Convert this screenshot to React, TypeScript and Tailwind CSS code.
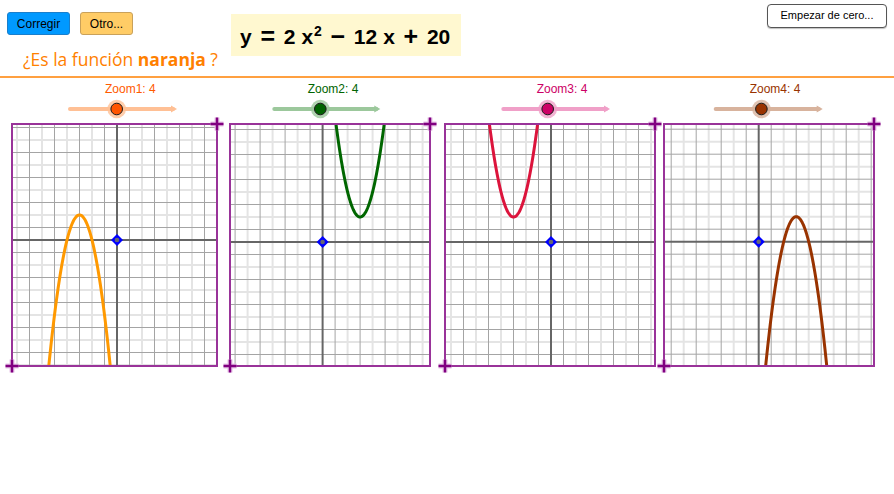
import React from "react";

const H = 242;
const U = 12.5;

type Panel = {
  w: number;
  ox: number;
  oy: number;
  f: (x: number) => number;
  curve: string;
  label: string;
  labelLeft: number;
  labelColor: string;
  s1: number;
  s2: number;
  knob: number;
  track: string;
  knobFill: string;
};

const panels: Panel[] = [
  {
    w: 205, ox: 105, oy: 116,
    f: (x) => -2 * (x + 3) * (x + 3) + 2, curve: "#ff9900",
    label: "Zoom1: 4", labelLeft: 93, labelColor: "#ff5a00",
    s1: 58, s2: 164, knob: 104.7, track: "#ffc095", knobFill: "#ff5500",
  },
  {
    w: 200, ox: 92.6, oy: 118,
    f: (x) => 2 * (x - 3) * (x - 3) + 2, curve: "#006600",
    label: "Zoom2: 4", labelLeft: 77.7, labelColor: "#006400",
    s1: 44.3, s2: 149.3, knob: 90.3, track: "#9cc89c", knobFill: "#006400",
  },
  {
    w: 210, ox: 106, oy: 118,
    f: (x) => 2 * (x + 3) * (x + 3) + 2, curve: "#dc143c",
    label: "Zoom3: 4", labelLeft: 91.7, labelColor: "#cc0066",
    s1: 58.3, s2: 164, knob: 102.7, track: "#f0a0c8", knobFill: "#cc0066",
  },
  {
    w: 210, ox: 94.7, oy: 117.7,
    f: (x) => -2 * (x - 3) * (x - 3) + 2, curve: "#993300",
    label: "Zoom4: 4", labelLeft: 85.7, labelColor: "#993300",
    s1: 51.7, s2: 157.7, knob: 97.4, track: "#d8b39d", knobFill: "#993300",
  },
];

const marginClass = ["ml-[12px]", "ml-[13px]", "ml-[15px]", "ml-[9px]"];

function Plus({ x, y }: { x: number; y: number }) {
  const d = `M${x - 6.5} ${y}H${x + 6.5}M${x} ${y - 6.5}V${y + 6.5}`;
  return (
    <g>
      <path d={d} stroke="#e7c4e7" strokeWidth={5} />
      <path d={d} stroke="#800080" strokeWidth={2.5} />
    </g>
  );
}

function Slider({ p }: { p: Panel }) {
  return (
    <svg width={p.w} height={28} className="block overflow-visible">
      <line x1={p.s1} y1={13} x2={p.s2 - 3} y2={13} stroke={p.track} strokeWidth={4} strokeLinecap="round" />
      <path d={`M${p.s2 - 5} 9.5L${p.s2 + 1} 13L${p.s2 - 5} 16.5Z`} fill={p.track} />
      <circle cx={p.knob} cy={13} r={9.3} fill={p.track} opacity={0.8} />
      <circle cx={p.knob} cy={13} r={5.8} fill={p.knobFill} stroke="#1a1a1a" strokeWidth={1} />
    </svg>
  );
}

function Graph({ p, idx }: { p: Panel; idx: number }) {
  const vLight: number[] = [];
  const vDark: number[] = [];
  const hLight: number[] = [];
  const hDark: number[] = [];
  for (let k = -30; k <= 30; k++) {
    if (k === 0) continue;
    const x = p.ox + k * U;
    const y = p.oy + k * U;
    const even = k % 2 === 0;
    if (x > 0 && x < p.w) (even ? vLight : vDark).push(x);
    if (y > 0 && y < H) (even ? hLight : hDark).push(y);
  }
  const pts: string[] = [];
  for (let px = 0; px <= p.w; px += 0.5) {
    const y = p.oy - p.f((px - p.ox) / U) * U;
    pts.push(`${px},${y.toFixed(2)}`);
  }
  const cid = `clip${idx}`;
  return (
    <svg width={p.w} height={H} className="block overflow-visible">
      <defs>
        <clipPath id={cid}>
          <rect x={0} y={0} width={p.w} height={H} />
        </clipPath>
      </defs>
      <rect x={0} y={0} width={p.w} height={H} fill="#ffffff" />
      {vLight.map((x) => (
        <line key={`vl${x}`} x1={x} y1={0} x2={x} y2={H} stroke="#e4e4e4" strokeWidth={2} />
      ))}
      {hLight.map((y) => (
        <line key={`hl${y}`} x1={0} y1={y} x2={p.w} y2={y} stroke="#e4e4e4" strokeWidth={2} />
      ))}
      {vDark.map((x) => (
        <line key={`vd${x}`} x1={x} y1={0} x2={x} y2={H} stroke="#a4a4a4" strokeWidth={1} />
      ))}
      {hDark.map((y) => (
        <line key={`hd${y}`} x1={0} y1={y} x2={p.w} y2={y} stroke="#a4a4a4" strokeWidth={1} />
      ))}
      <line x1={p.ox} y1={0} x2={p.ox} y2={H} stroke="#666666" strokeWidth={2} />
      <line x1={0} y1={p.oy} x2={p.w} y2={p.oy} stroke="#666666" strokeWidth={2} />
      <polyline
        points={pts.join(" ")}
        fill="none"
        stroke={p.curve}
        strokeWidth={3}
        clipPath={`url(#${cid})`}
      />
      <rect x={0} y={0} width={p.w} height={H} fill="none" stroke="#993399" strokeWidth={2} />
      <path
        d={`M${p.ox} ${p.oy - 6}L${p.ox + 6} ${p.oy}L${p.ox} ${p.oy + 6}L${p.ox - 6} ${p.oy}Z`}
        fill="#0000ff"
      />
      <circle cx={p.ox} cy={p.oy} r={2.3} fill="#666677" />
      <Plus x={p.w} y={0} />
      <Plus x={0} y={H} />
    </svg>
  );
}

function Op({ children }: { children: React.ReactNode }) {
  return (
    <span className="inline-block w-[17px] mx-[7.5px] text-center text-[25px] leading-none">
      {children}
    </span>
  );
}

export default function App() {
  return (
    <div className="w-[894px] h-[494px] bg-white overflow-hidden font-['Liberation_Sans',Arial,sans-serif]">
      <header className="flex h-[78px] box-border border-b-2 border-[#ffa040]">
        <div className="flex flex-col w-[231px] shrink-0 pl-[7px] pt-[12px]">
          <div className="flex gap-[10px]">
            <button className="w-[63px] h-[23px] rounded-[3px] bg-[#0099ff] border border-[#1a7fcc] text-[12px] text-black leading-none">
              Corregir
            </button>
            <button className="w-[53px] h-[23px] rounded-[3px] bg-[#ffcc66] border border-[#c9a15a] text-[12px] text-black leading-none">
              Otro...
            </button>
          </div>
          <p className="mt-[14px] pl-[16px] text-[17.5px] leading-[20px] text-[#ff8000] font-['Open_Sans',sans-serif] whitespace-nowrap">
            ¿Es la función <b className="font-bold">naranja</b> ?
          </p>
        </div>
        <div className="mt-[14px] h-[42px] w-[230px] shrink-0 bg-[#fff8d0] flex items-center pl-[9px] pt-[2px] font-['Liberation_Sans',Arial,sans-serif] font-bold text-[21px] leading-none text-black whitespace-nowrap">
          <span>y</span>
          <Op>=</Op>
          <span>2</span>
          <span className="ml-[6px]">x</span>
          <span className="text-[14px] self-start mt-[8px] ml-[1px]">2</span>
          <Op>−</Op>
          <span>12</span>
          <span className="ml-[6px]">x</span>
          <Op>+</Op>
          <span>20</span>
        </div>
        <div className="ml-auto mr-[7px] mt-[2px]">
          <button className="w-[120px] h-[24px] rounded-[4px] bg-white border border-[#555555] shadow-[0_1px_1px_rgba(0,0,0,0.25)] text-[11px] text-black leading-none">
            Empezar de cero...
          </button>
        </div>
      </header>
      <main className="flex">
        {panels.map((p, i) => (
          <section key={p.label} className={`flex flex-col shrink-0 ${marginClass[i]}`} style={{ width: p.w }}>
            <div className="mt-[5px] h-[13px] leading-[13px] text-[12px] whitespace-nowrap" style={{ paddingLeft: p.labelLeft, color: p.labelColor }}>
              {p.label}
            </div>
            <Slider p={p} />
            <Graph p={p} idx={i} />
          </section>
        ))}
      </main>
    </div>
  );
}
